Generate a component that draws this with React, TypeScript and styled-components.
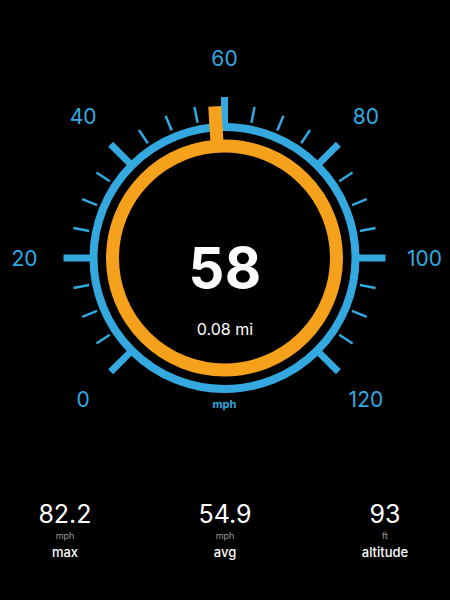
import React from "react";
import styled, { createGlobalStyle } from "styled-components";

/** ===========================================================================
 * Constants
 * ============================================================================
 */
const BLUE = "#33a9e0";
const ORANGE = "#f6a11c";
const CX = 224.5;
const CY = 258;
const SPEED = 58;

const GlobalStyle = createGlobalStyle`
  html, body {
    margin: 0;
    padding: 0;
    background: #000;
  }
  body {
    font-family: Inter, "Open Sans", "Liberation Sans", sans-serif;
    color: #fff;
  }
`;

/** ===========================================================================
 * Layout
 * ============================================================================
 */
const Screen = styled.div`
  width: 450px;
  height: 600px;
  background: #000;
  display: flex;
  flex-direction: column;
  overflow: hidden;
`;

const GaugeWrap = styled.div`
  position: relative;
  height: 430px;
`;

const Readout = styled.div`
  position: absolute;
  top: 240px;
  left: 0;
  right: 0;
  display: flex;
  flex-direction: column;
  align-items: center;
`;

const Speed = styled.div`
  font-size: 56px;
  line-height: 56px;
  font-weight: 700;
  letter-spacing: 0.5px;
`;

const Distance = styled.div`
  margin-top: 23px;
  font-size: 16px;
  line-height: 20px;
`;

const Stats = styled.div`
  display: flex;
  justify-content: space-between;
  padding: 72px 20px 0;
`;

const Stat = styled.div`
  width: 90px;
  display: flex;
  flex-direction: column;
  align-items: center;
`;

const StatValue = styled.div`
  font-size: 25px;
  line-height: 25px;
`;

const StatUnit = styled.div`
  margin-top: 3px;
  font-size: 9px;
  line-height: 12px;
  color: #9a9a9a;
`;

const StatLabel = styled.div`
  margin-top: 2px;
  font-size: 13px;
  line-height: 16px;
  font-weight: 500;
`;

/** ===========================================================================
 * Gauge drawing
 * ============================================================================
 */
const polar = (deg: number, r: number) => {
  const rad = (deg * Math.PI) / 180;
  return { x: CX + r * Math.sin(rad), y: CY - r * Math.cos(rad) };
};

const speedToAngle = (mph: number) => -135 + mph * 2.25;

const Gauge = () => {
  const ticks = [];
  for (let mph = 0; mph <= 120; mph += 5) {
    const major = mph % 20 === 0;
    const a = speedToAngle(mph);
    const p1 = polar(a, major ? 131 : 138);
    const p2 = polar(a, major ? 161 : 154);
    ticks.push(
      <line
        key={mph}
        x1={p1.x}
        y1={p1.y}
        x2={p2.x}
        y2={p2.y}
        stroke={BLUE}
        strokeWidth={major ? 7 : 2.5}
      />
    );
  }

  const labels = [0, 20, 40, 60, 80, 100, 120].map((mph) => {
    const p = polar(speedToAngle(mph), 200);
    return (
      <text
        key={mph}
        x={p.x}
        y={p.y}
        fill={BLUE}
        fontSize={21}
        textAnchor="middle"
        dominantBaseline="central"
        fontFamily="Inter, sans-serif"
      >
        {mph}
      </text>
    );
  });

  /* needle sits just left of the 60 tick */
  const needleAngle = speedToAngle(SPEED) + 0.8;
  const n1 = polar(needleAngle, 108);
  const n2 = polar(needleAngle, 152);

  return (
    <svg width={450} height={430} viewBox="0 0 450 430" style={{ display: "block" }}>
      <circle cx={CX} cy={CY} r={131} fill="none" stroke={BLUE} strokeWidth={8} />
      {ticks}
      {labels}
      <text
        x={CX}
        y={404}
        fill={BLUE}
        fontSize={11}
        fontWeight={700}
        textAnchor="middle"
        dominantBaseline="central"
        fontFamily="Inter, sans-serif"
      >
        mph
      </text>
      <circle cx={CX} cy={CY} r={112} fill="none" stroke={ORANGE} strokeWidth={13} />
      <line x1={n1.x} y1={n1.y} x2={n2.x} y2={n2.y} stroke={ORANGE} strokeWidth={13} />
    </svg>
  );
};

/** ===========================================================================
 * App
 * ============================================================================
 */
const STATS = [
  { value: "82.2", unit: "mph", label: "max" },
  { value: "54.9", unit: "mph", label: "avg" },
  { value: "93", unit: "ft", label: "altitude" },
];

export default function App() {
  return (
    <Screen>
      <GlobalStyle />
      <GaugeWrap>
        <Gauge />
        <Readout>
          <Speed>{SPEED}</Speed>
          <Distance>0.08 mi</Distance>
        </Readout>
      </GaugeWrap>
      <Stats>
        {STATS.map((s) => (
          <Stat key={s.label}>
            <StatValue>{s.value}</StatValue>
            <StatUnit>{s.unit}</StatUnit>
            <StatLabel>{s.label}</StatLabel>
          </Stat>
        ))}
      </Stats>
    </Screen>
  );
}
